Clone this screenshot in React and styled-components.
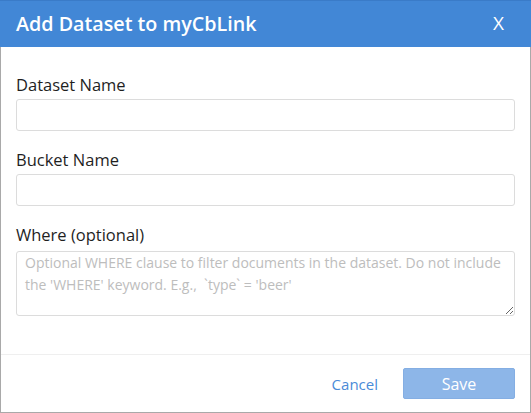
import styled, { createGlobalStyle } from "styled-components";

const GlobalStyle = createGlobalStyle`
  html, body {
    margin: 0;
    padding: 0;
    background: #ffffff;
  }
  body {
    font-family: "Open Sans", "Liberation Sans", sans-serif;
  }
  * {
    box-sizing: border-box;
  }
`;

const Dialog = styled.div`
  width: 531px;
  height: 413px;
  display: flex;
  flex-direction: column;
  background: #ffffff;
`;

const Header = styled.div`
  height: 47px;
  flex: none;
  display: flex;
  align-items: center;
  justify-content: space-between;
  padding: 0 27px 2px 16px;
  background: #4287d6;
  border-top: 1px solid #3a7bc8;
  color: #ffffff;
`;

const Title = styled.h1`
  margin: 0;
  font-size: 19.7px;
  font-weight: 600;
`;

const Close = styled.button`
  border: 0;
  padding: 0;
  background: none;
  color: #ffffff;
  font-family: inherit;
  font-size: 19px;
  cursor: pointer;
`;

const Frame = styled.div`
  flex: 1;
  display: flex;
  flex-direction: column;
  border: 1px solid #a9a9a9;
  border-top: none;
`;

const Body = styled.div`
  flex: 1;
  padding: 27px 15px 0 15px;
  display: flex;
  flex-direction: column;
`;

const Field = styled.div`
  display: flex;
  flex-direction: column;
  margin-bottom: 18px;
`;

const Label = styled.label`
  font-size: 16.5px;
  line-height: 22px;
  color: #1f1f1f;
  margin-bottom: ${(p) => (p.$tall ? 5 : 3)}px;
`;

const Input = styled.input`
  height: 32px;
  width: 100%;
  border: 1px solid #dcdcdc;
  border-radius: 3px;
  padding: 0 8px;
  font-family: inherit;
  font-size: 14px;
  outline: none;
`;

const TextArea = styled.textarea`
  height: 65px;
  width: 100%;
  border: 1px solid #dcdcdc;
  border-radius: 3px;
  padding: 0 8px;
  font-family: inherit;
  font-size: 14px;
  line-height: 22px;
  color: #333;
  outline: none;
  resize: vertical;

  &::placeholder {
    color: #bdbdbd;
  }
`;

const Footer = styled.div`
  height: 58px;
  flex: none;
  display: flex;
  align-items: center;
  justify-content: flex-end;
  gap: 25px;
  padding: 0 15px;
  border-top: 1px solid #efefef;
`;

const LinkButton = styled.button`
  border: 0;
  padding: 0;
  background: none;
  color: #4a8bd8;
  font-family: inherit;
  font-size: 15px;
  cursor: pointer;
`;

const PrimaryButton = styled.button`
  width: 112px;
  height: 31px;
  border: 1px solid #84aee3;
  border-radius: 2px;
  background: #8db6e8;
  color: #ffffff;
  font-family: inherit;
  font-size: 16px;
  cursor: not-allowed;
`;

const App = () => {
  return (
    <>
      <GlobalStyle />
      <Dialog>
        <Header>
          <Title>Add Dataset to myCbLink</Title>
          <Close>X</Close>
        </Header>
        <Frame>
          <Body>
            <Field>
              <Label>Dataset Name</Label>
              <Input type="text" />
            </Field>
            <Field>
              <Label>Bucket Name</Label>
              <Input type="text" />
            </Field>
            <Field>
              <Label $tall>Where (optional)</Label>
              <TextArea placeholder="Optional WHERE clause to filter documents in the dataset. Do not include the 'WHERE' keyword. E.g.,  `type` = 'beer'" />
            </Field>
          </Body>
          <Footer>
            <LinkButton>Cancel</LinkButton>
            <PrimaryButton disabled>Save</PrimaryButton>
          </Footer>
        </Frame>
      </Dialog>
    </>
  );
};

export default App;
